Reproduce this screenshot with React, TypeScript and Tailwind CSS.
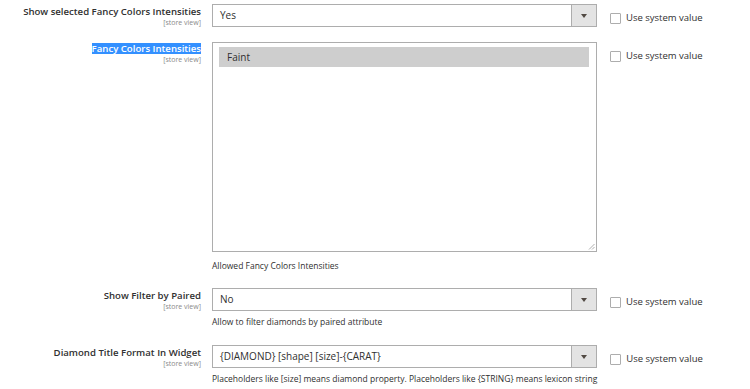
import React from "react";

const font = { fontFamily: '"Open Sans", "Liberation Sans", sans-serif' };

function Arrow() {
  return (
    <div className="flex h-full w-[25px] shrink-0 items-center justify-center border-l border-[#adadad] bg-[#e3e3e3]">
      <svg width="6" height="4" viewBox="0 0 6 4">
        <path d="M0 0 L6 0 L3 4 Z" fill="#514943" />
      </svg>
    </div>
  );
}

function Label({ text, highlight }: { text: string; highlight?: boolean }) {
  return (
    <div className="flex w-[201px] shrink-0 flex-col items-end">
      <span
        className={
          "text-[9.6px] font-semibold leading-[11px] " +
          (highlight ? "bg-[#3390ff] text-white" : "text-[#303030]")
        }
      >
        {text}
      </span>
      <span className="mt-[1px] text-[7px] leading-[9px] text-[#8a8a8a]">[store view]</span>
    </div>
  );
}

function SysValue() {
  return (
    <div className="flex items-center gap-[5px] pt-[8px]">
      <div className="h-[11px] w-[11px] rounded-[1px] border border-[#adadad] bg-white" />
      <span className="text-[9.5px] leading-[12px] text-[#303030]">Use system value</span>
    </div>
  );
}

function Select({ value }: { value: string }) {
  return (
    <div className="flex h-[23px] w-[385px] items-center border border-[#adadad] bg-white">
      <div className="flex-1 pl-[7px] text-[10px] text-[#303030]">{value}</div>
      <Arrow />
    </div>
  );
}

function Note({ text, pad }: { text: string; pad: string }) {
  return <div className={pad + " text-[8.5px] leading-[11px] text-[#303030]"}>{text}</div>;
}

export default function App() {
  return (
    <div className="h-[389px] w-[750px] overflow-hidden bg-white" style={font}>
      <div className="flex flex-col pt-[4px]">
        {/* Row 1 */}
        <div className="flex">
          <div className="pt-[2px]">
            <Label text="Show selected Fancy Colors Intensities" />
          </div>
          <div className="ml-[11px]">
            <Select value="Yes" />
          </div>
          <div className="ml-[13px]">
            <SysValue />
          </div>
        </div>

        {/* Row 2 */}
        <div className="mt-[15px] flex">
          <div className="pt-[1px]">
            <Label text="Fancy Colors Intensities" highlight />
          </div>
          <div className="ml-[11px] flex flex-col">
            <div className="relative h-[210px] w-[385px] border border-[#adadad] bg-white p-[4px] pl-[6px] pr-[7px]">
              <div className="flex h-[20px] items-center bg-[#cecece] pl-[8px] text-[10px] text-[#303030]">
                Faint
              </div>
              <svg className="absolute bottom-[1px] right-[1px]" width="7" height="7" viewBox="0 0 7 7">
                <path d="M6.5 1 L1 6.5 M6.5 4 L4 6.5" stroke="#9a9a9a" strokeWidth="0.8" />
              </svg>
            </div>
            <Note pad="pt-[8px]" text="Allowed Fancy Colors Intensities" />
          </div>
          <div className="ml-[13px]">
            <SysValue />
          </div>
        </div>

        {/* Row 3 */}
        <div className="mt-[17px] flex">
          <div className="pt-[2px]">
            <Label text="Show Filter by Paired" />
          </div>
          <div className="ml-[11px] flex flex-col">
            <Select value="No" />
            <Note pad="pt-[5px]" text="Allow to filter diamonds by paired attribute" />
          </div>
          <div className="ml-[13px]">
            <SysValue />
          </div>
        </div>

        {/* Row 4 */}
        <div className="mt-[18px] flex">
          <div className="pt-[2px]">
            <Label text="Diamond Title Format In Widget" />
          </div>
          <div className="ml-[11px] flex flex-col">
            <Select value="{DIAMOND} [shape] [size]-{CARAT}" />
            <Note
              pad="pt-[5px]"
              text="Placeholders like [size] means diamond property. Placeholders like {STRING} means lexicon string"
            />
          </div>
          <div className="ml-[13px]">
            <SysValue />
          </div>
        </div>
      </div>
    </div>
  );
}
